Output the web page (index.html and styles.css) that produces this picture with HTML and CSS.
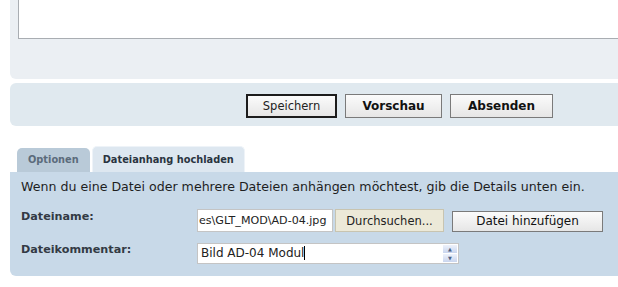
FILE: index.html
```html
<!DOCTYPE html>
<html lang="de">
<head>
   <meta charset="UTF-8">
   <title>Beitrag schreiben</title>
   <link rel="stylesheet" href="styles.css">
</head>
<body>
   <div class="page">
      <div class="editor-panel">
         <div class="message-box"></div>
      </div>

      <div class="actions-panel">
         <button class="btn btn-default">Speichern</button>
         <button class="btn btn-strong">Vorschau</button>
         <button class="btn btn-strong btn-wide">Absenden</button>
      </div>

      <div class="tabs">
         <div class="tab">Optionen</div>
         <div class="tab tab-active">Dateianhang hochladen</div>
      </div>

      <div class="tab-panel">
         <p class="hint">Wenn du eine Datei oder mehrere Dateien anhängen möchtest, gib die Details unten ein.</p>
         <div class="field-row">
            <label class="field-label">Dateiname:</label>
            <div class="file-field">
               <span class="file-path">es\GLT_MOD\AD-04.jpg</span>
               <span class="browse-button">Durchsuchen...</span>
            </div>
            <button class="btn btn-add">Datei hinzufügen</button>
         </div>
         <div class="field-row">
            <label class="field-label">Dateikommentar:</label>
            <div class="comment-field">
               <span class="comment-text">Bild AD-04 Modul</span><span class="caret"></span>
               <span class="spin">
                  <span class="spin-btn">&#9650;</span>
                  <span class="spin-btn">&#9660;</span>
               </span>
            </div>
         </div>
      </div>
   </div>
</body>
</html>
```

FILE: styles.css
```css
body {
   margin: 0;
   background-color: #ffffff;
   font-family: "DejaVu Sans", Verdana, sans-serif;
   color: #222222;
}

.page {
   padding-left: 10px;
   overflow: hidden;
}

.editor-panel {
   height: 79px;
   width: 700px;
   padding-left: 8px;
   background-color: #ebeff3;
   border-radius: 0 0 0 6px;
   box-sizing: border-box;
}

.message-box {
   height: 39px;
   background-color: #ffffff;
   border-left: 1px solid #a9adb2;
   border-bottom: 1px solid #a9adb2;
   box-sizing: border-box;
}

.actions-panel {
   display: flex;
   align-items: flex-start;
   gap: 8px;
   width: 780px;
   height: 43px;
   margin-top: 4px;
   padding: 11px 0 0 236px;
   background-color: #e0e9ef;
   border-radius: 6px 0 0 6px;
   box-sizing: border-box;
}

.btn {
   height: 24px;
   padding: 0;
   font-family: "DejaVu Sans", Verdana, sans-serif;
   font-size: 12px;
   color: #111111;
   background: linear-gradient(#fbfbfb, #e6e6e6);
   border: 1px solid #7a7a7a;
   box-sizing: border-box;
}

.btn-default {
   width: 91px;
   border: 2px solid #1c1c1c;
   font-size: 11.5px;
   color: #222222;
}

.btn-strong {
   width: 97px;
   font-weight: bold;
}

.btn-wide {
   width: 103px;
}

.tabs {
   display: flex;
   align-items: flex-end;
   gap: 2px;
   height: 26px;
   margin-top: 20px;
   padding-left: 7px;
}

.tab {
   height: 24px;
   padding: 0 11px;
   line-height: 24px;
   font-size: 9.8px;
   font-weight: bold;
   color: #5b6b7b;
   background-color: #b9cad8;
   border-radius: 5px 5px 0 0;
}

.tab-active {
   height: 26px;
   padding: 0 10px;
   line-height: 26px;
   color: #2a3440;
   background-color: #dde7f0;
   border: 1px solid #eef3f8;
   border-bottom: none;
   box-sizing: border-box;
}

.tab-panel {
   width: 700px;
   height: 104px;
   padding: 7px 0 0 11px;
   background-color: #c8d9e8;
   border-radius: 0 0 0 6px;
   box-sizing: border-box;
}

.hint {
   margin: 0 0 14px 0;
   font-size: 12.6px;
   color: #1e1e1e;
}

.field-row {
   display: flex;
   align-items: center;
   height: 24px;
   margin-bottom: 9px;
}

.field-label {
   width: 176px;
   margin-top: -8px;
   font-size: 11.2px;
   font-weight: bold;
   color: #333a44;
}

.file-field {
   display: flex;
   height: 23px;
}

.file-path {
   width: 136px;
   padding-left: 1px;
   white-space: nowrap;
   line-height: 22px;
   font-size: 11.1px;
   background-color: #ffffff;
   border: 1px solid #c4c4c4;
   box-sizing: border-box;
}

.browse-button {
   width: 109px;
   margin-left: 2px;
   line-height: 22px;
   text-align: center;
   font-size: 11.5px;
   background-color: #ece9d8;
   border: 1px solid #c8c4b0;
   box-sizing: border-box;
}

.btn-add {
   width: 151px;
   height: 21px;
   margin: 2px 0 0 8px;
   font-size: 12px;
}

.comment-field {
   display: flex;
   align-items: center;
   width: 262px;
   height: 21px;
   padding-left: 3px;
   background-color: #ffffff;
   border: 1px solid #c4c4c4;
   box-sizing: border-box;
   position: relative;
}

.comment-text {
   font-size: 12px;
}

.caret {
   width: 1px;
   height: 14px;
   background-color: #000000;
}

.spin {
   position: absolute;
   right: 1px;
   top: 1px;
   display: flex;
   flex-direction: column;
   gap: 1px;
}

.spin-btn {
   width: 14px;
   height: 8px;
   line-height: 8px;
   text-align: center;
   font-size: 5px;
   color: #4d6185;
   background: linear-gradient(#eef2fb, #c9d5ee);
}
```
